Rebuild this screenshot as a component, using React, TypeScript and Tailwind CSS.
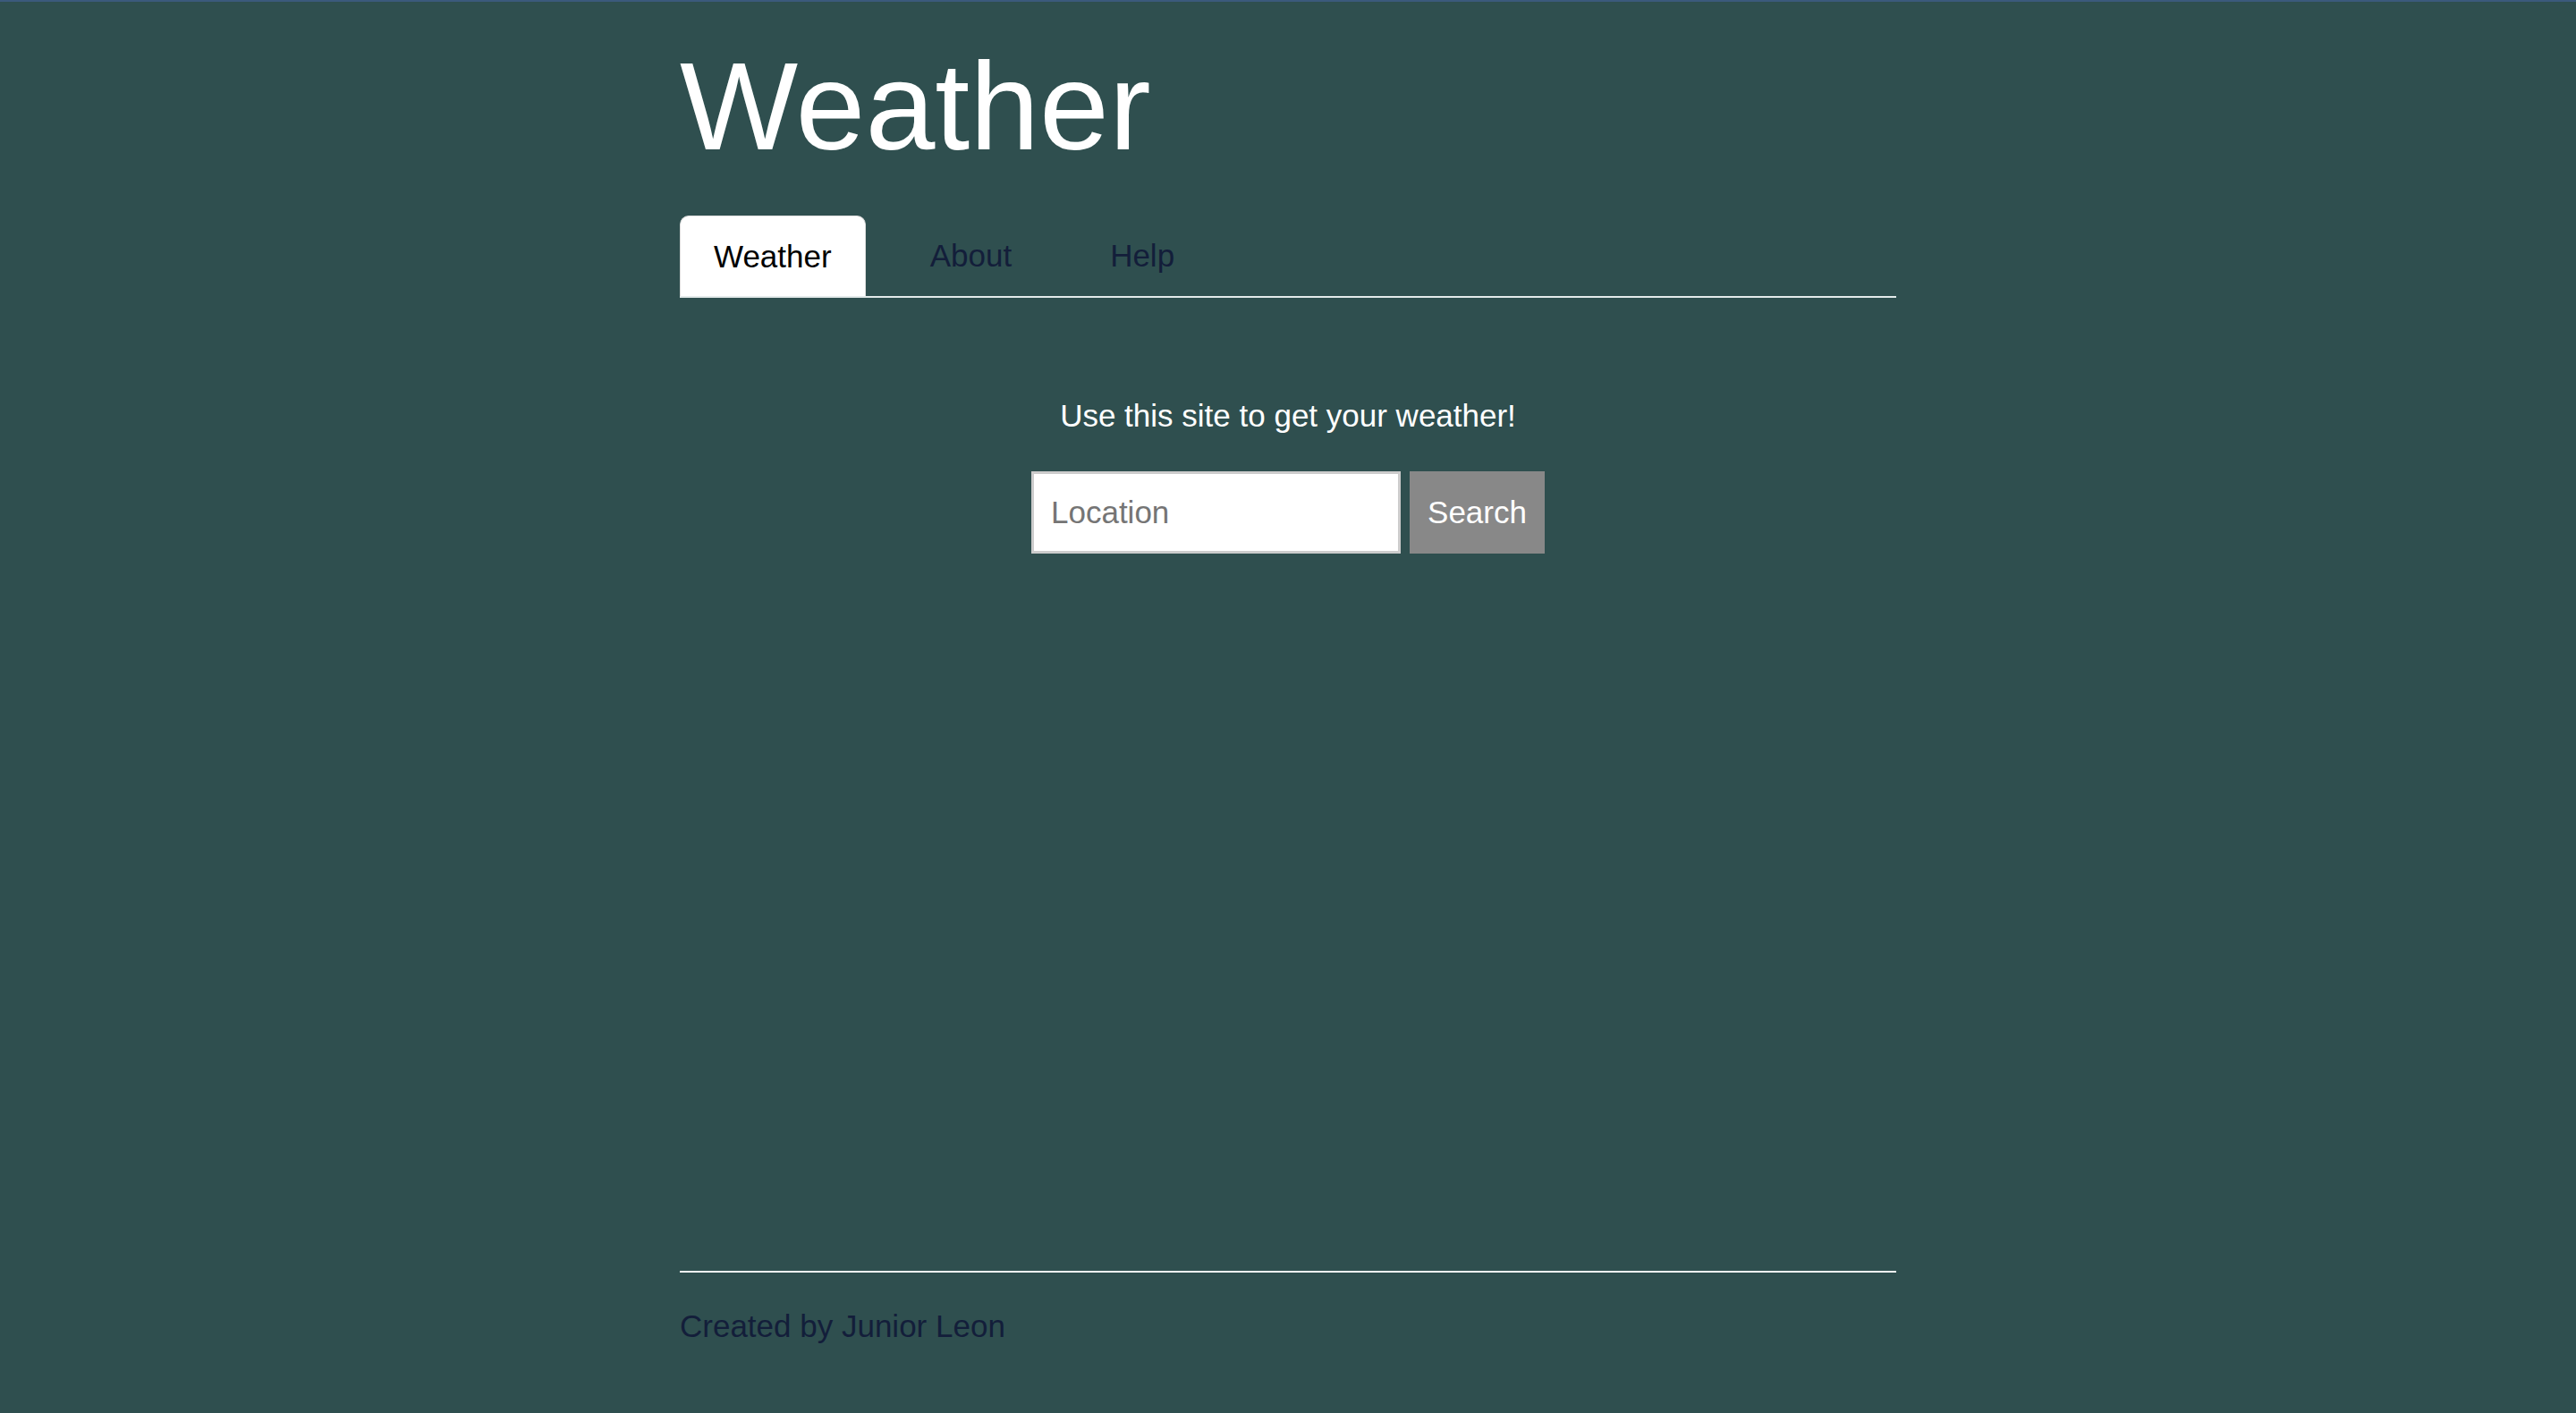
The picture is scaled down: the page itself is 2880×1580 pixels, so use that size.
export default function App() {
  const font = { fontFamily: '"Liberation Sans", Arial, sans-serif' };

  return (
    <div
      className="flex min-h-screen flex-col border-t-2 border-[#3b5a7c] bg-[#2f4f4f]"
      style={font}
    >
      <div className="mx-auto flex w-full max-w-[1360px] flex-1 flex-col">
        <header>
          <h1 className="mt-[47px] text-[140px] leading-none text-white">Weather</h1>
          <nav className="mt-[53px] flex h-[91px] items-end gap-[34px] border-b-2 border-[#e3eaea]">
            <a className="flex h-[90px] items-center rounded-t-[10px] border border-b-0 border-[#dcdcdc] bg-white px-[37px] text-[35px] leading-[40px] text-black">
              Weather
            </a>
            <a className="flex h-[90px] items-center px-[38px] text-[35px] leading-[40px] text-[#131e3a]">About</a>
            <a className="flex h-[90px] items-center px-[38px] text-[35px] leading-[40px] text-[#131e3a]">Help</a>
          </nav>
        </header>

        <main className="flex flex-col items-center pt-[112px]">
          <p className="text-[35px] leading-[40px] text-white">Use this site to get your weather!</p>
          <form className="mt-[42px] flex gap-[10px]" onSubmit={e => e.preventDefault()}>
            <input
              type="text"
              placeholder="Location"
              className="h-[92px] w-[413px] border-[3px] border-[#cccccc] bg-white px-[19px] text-[35px] text-black outline-none placeholder:text-[#757575]"
            />
            <button className="h-[92px] w-[151px] bg-[#888888] text-[35px] text-white">Search</button>
          </form>
        </main>

        <footer className="mt-auto border-t-2 border-[#f2f5f5] pb-[77px] pt-[40px]">
          <p className="text-[35px] leading-[40px] text-[#131e3a]">Created by Junior Leon</p>
        </footer>
      </div>
    </div>
  );
}
